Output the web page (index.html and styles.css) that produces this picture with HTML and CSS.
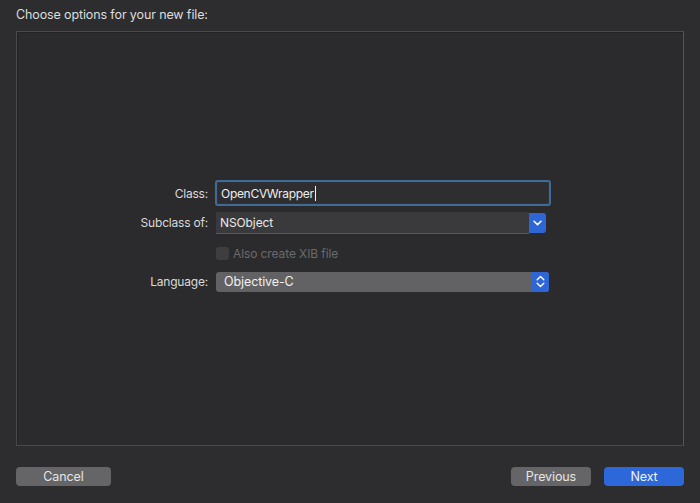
FILE: index.html
```html
<!DOCTYPE html>
<html>
<head>
<meta charset="utf-8">
<link rel="stylesheet" href="styles.css">
</head>
<body>
<div class="window">
  <div class="title">Choose options for your new file:</div>
  <div class="panel">
    <div class="form">
      <div class="row row-class">
        <label class="label">Class:</label>
        <div class="field-ring"><div class="field">OpenCVWrapper<span class="caret"></span></div></div>
      </div>
      <div class="row row-sub">
        <label class="label">Subclass of:</label>
        <div class="combo">
          <div class="combo-text">NSObject</div>
          <div class="combo-btn">
            <svg width="9" height="6" viewBox="0 0 9 6"><path d="M1 1.2 L4.5 4.6 L8 1.2" fill="none" stroke="#fff" stroke-width="1.5" stroke-linecap="round" stroke-linejoin="round"/></svg>
          </div>
        </div>
      </div>
      <div class="row row-check">
        <span class="label"></span>
        <div class="check-wrap"><span class="checkbox"></span><span class="check-text">Also create XIB file</span></div>
      </div>
      <div class="row row-lang">
        <label class="label">Language:</label>
        <div class="popup">
          <div class="popup-text">Objective-C</div>
          <div class="popup-btn">
            <svg width="9" height="13" viewBox="0 0 9 13"><path d="M1.2 4.8 L4.5 1.6 L7.8 4.8 M1.2 8.2 L4.5 11.4 L7.8 8.2" fill="none" stroke="#fff" stroke-width="1.4" stroke-linecap="round" stroke-linejoin="round"/></svg>
          </div>
        </div>
      </div>
    </div>
  </div>
  <div class="footer">
    <button class="btn btn-cancel">Cancel</button>
    <div class="spacer"></div>
    <button class="btn btn-prev">Previous</button>
    <button class="btn btn-next">Next</button>
  </div>
</div>
</body>
</html>
```

FILE: styles.css
```css
html, body {
  margin: 0;
  padding: 0;
  background: #2d2d2f;
  width: 700px;
  height: 503px;
  overflow: hidden;
  font-family: Inter, "Noto Sans", "Liberation Sans", sans-serif;
  font-size: 12px;
  letter-spacing: -0.1px;
  color: #dedede;
}
.window {
  display: flex;
  flex-direction: column;
  padding: 0 16px 0 16px;
  height: 503px;
  box-sizing: border-box;
}
.title {
  height: 31px;
  line-height: 30px;
  color: #dcdcdc;
  font-size: 12.5px;
  letter-spacing: -0.12px;
}
.panel {
  height: 415px;
  box-sizing: border-box;
  border: 1px solid #4a4a4c;
  border-right-color: #555557;
  background: #2b2b2d;
  box-shadow: inset 1px 1px 0 #232325;
  padding-top: 148px;
}
.form {
  display: flex;
  flex-direction: column;
}
.row {
  display: flex;
  align-items: center;
  gap: 7px;
}
.label {
  width: 191px;
  text-align: right;
  color: #dadada;
  flex: none;
  letter-spacing: -0.2px;
}
.row-class { height: 26px; }
.row-sub { height: 23px; margin-top: 5px; }
.row-check { height: 14px; margin-top: 12px; }
.row-lang { height: 21px; margin-top: 11px; }

.field-ring {
  width: 336px;
  height: 26px;
  box-sizing: border-box;
  border: 2px solid #3f6b96;
  border-radius: 3px;
  padding: 1px;
  background: #2f3338;
}
.field {
  height: 100%;
  background: #2e2e30;
  color: #ededed;
  padding-left: 3px;
  display: flex;
  align-items: center;
  font-size: 12px;
  letter-spacing: -0.3px;
}
.caret {
  display: inline-block;
  width: 1px;
  height: 15px;
  background: #f0f0f0;
  margin-left: 1px;
}
.combo {
  margin-left: 1px;
  width: 330px;
  height: 22px;
  display: flex;
}
.combo-text {
  flex: 1;
  background: #3a3a3c;
  border-bottom: 1px solid #58585a;
  box-sizing: border-box;
  padding-left: 4px;
  display: flex;
  align-items: center;
  color: #e8e8e8;
}
.combo-btn {
  width: 17px;
  height: 20px;
  margin-top: 1px;
  background: #2f66d6;
  border-radius: 0 3px 3px 0;
  display: flex;
  align-items: center;
  justify-content: center;
}
.check-wrap {
  display: flex;
  align-items: center;
  gap: 4px;
  margin-left: 1px;
}
.checkbox {
  width: 13px;
  height: 13px;
  border-radius: 3px;
  background: #3e3e40;
  box-sizing: border-box;
}
.check-text {
  color: #6a6a6c;
}
.popup {
  margin-left: 1px;
  width: 333px;
  height: 20px;
  display: flex;
  border-radius: 3px;
  overflow: hidden;
  background: #626264;
}
.popup-text {
  flex: 1;
  padding-left: 8px;
  display: flex;
  align-items: center;
  color: #f0f0f0;
  font-size: 12.5px;
}
.popup-btn {
  width: 17px;
  background: #2f66d6;
  display: flex;
  align-items: center;
  justify-content: center;
}
.footer {
  display: flex;
  margin-top: 21px;
  align-items: center;
}
.spacer { flex: 1; }
.btn {
  height: 19px;
  border: none;
  border-radius: 4px;
  font-family: inherit;
  font-size: 12.5px;
  letter-spacing: -0.1px;
  color: #e6e6e6;
  padding: 0;
  background: #656567;
}
.btn-cancel { width: 95px; }
.btn-prev { width: 80px; margin-right: 13px; }
.btn-next { width: 80px; background: #2d68db; color: #f2f2f2; }
```
